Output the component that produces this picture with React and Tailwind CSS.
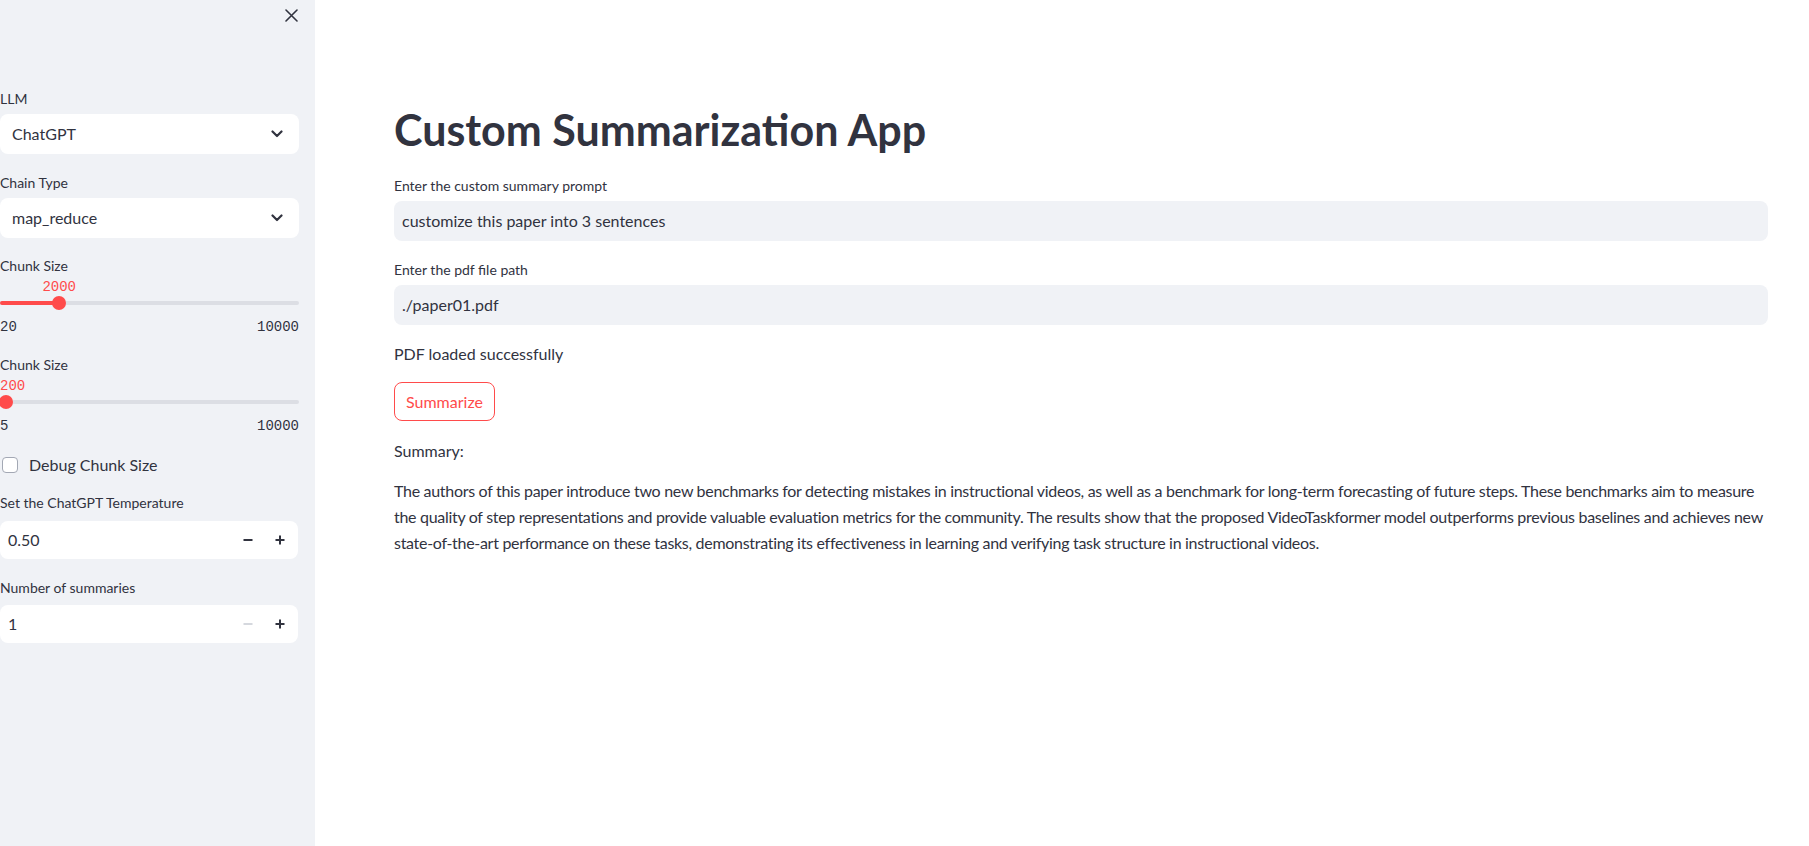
import React from 'react';

const font = { fontFamily: '"Source Sans Pro", Lato, "Noto Sans", sans-serif' };

const Chevron = () => (
  <svg width="12" height="8" viewBox="0 0 12 8" fill="none">
    <path d="M1.5 1.5 L6 6 L10.5 1.5" stroke="#31333f" strokeWidth="2.2" strokeLinecap="round" strokeLinejoin="round" />
  </svg>
);

const SelectBox = ({ value }) => (
  <div className="h-10 w-[299px] bg-white rounded-lg flex items-center justify-between pl-3 pr-4 text-base text-[#31333f]">
    <span>{value}</span>
    <Chevron />
  </div>
);

const Label = ({ children, className = '' }) => (
  <div className={`text-sm leading-5 text-[#31333f] ${className}`}>{children}</div>
);

// slider track is 299px wide in the sidebar
const Slider = ({ label, value, pct, min, max }) => (
  <div className="w-[299px]">
    <Label>{label}</Label>
    <div className="relative h-[19px] font-['Liberation_Mono',monospace] text-sm text-[#ff4b4b] leading-[19px]">
      {pct === 0 ? (
        <span className="absolute top-[2px] left-0">{value}</span>
      ) : (
        <span className="absolute top-[2px] -translate-x-1/2" style={{ left: `${pct * 299}px` }}>{value}</span>
      )}
    </div>
    <div className="relative h-4 flex items-center">
      <div className="h-1 w-full rounded bg-[#dcdee4]" />
      <div className="absolute left-0 h-1 rounded bg-[#ff4b4b]" style={{ width: `${pct * 299}px` }} />
      <div className="absolute h-3.5 w-3.5 rounded-full bg-[#ff4b4b]" style={{ left: `${Math.max(pct * 299 - 7, -1)}px` }} />
    </div>
    <div className="mt-[7px] flex justify-between h-[18px] leading-[18px] font-['Liberation_Mono',monospace] text-sm text-[#31333f]">
      <span>{min}</span>
      <span>{max}</span>
    </div>
  </div>
);

const Minus = ({ color }) => (
  <svg width="10" height="10" viewBox="0 0 10 10"><rect x="0.5" y="4" width="9" height="2" fill={color} /></svg>
);
const Plus = () => (
  <svg width="10" height="10" viewBox="0 0 10 10">
    <rect x="0.5" y="4" width="9" height="2" fill="#31333f" />
    <rect x="4" y="0.5" width="2" height="9" fill="#31333f" />
  </svg>
);

const NumberInput = ({ value, disabledMinus }) => (
  <div className="h-[38px] w-[298px] bg-white rounded-lg flex items-center pl-2 text-base text-[#31333f]">
    <span className="flex-1">{value}</span>
    <div className="w-8 flex justify-center"><Minus color={disabledMinus ? '#d5d8de' : '#31333f'} /></div>
    <div className="w-8 flex justify-center mr-0.5"><Plus /></div>
  </div>
);

const Sidebar = () => (
  <aside className="w-[315px] shrink-0 bg-[#f0f2f6] min-h-screen">
    <div className="flex justify-end pr-[17px] pt-[9px] h-[89px]">
      <svg width="13" height="13" viewBox="0 0 13 13">
        <path d="M1 1 L12 12 M12 1 L1 12" stroke="#31333f" strokeWidth="1.6" strokeLinecap="round" />
      </svg>
    </div>
    <Label>LLM</Label>
    <div className="mt-[5px]"><SelectBox value="ChatGPT" /></div>
    <Label className="mt-[19px]">Chain Type</Label>
    <div className="mt-[5px]"><SelectBox value="map_reduce" /></div>
    <div className="mt-[18px]">
      <Slider label="Chunk Size" value="2000" pct={0.198} min="20" max="10000" />
    </div>
    <div className="mt-[19px]">
      <Slider label="Chunk Size" value="200" pct={0} min="5" max="10000" />
    </div>
    <div className="mt-[18px] h-6 flex items-center">
      <div className="ml-[2px] h-4 w-4 rounded border border-[#a3a8b4] bg-white" />
      <span className="ml-[11px] text-base text-[#31333f]">Debug Chunk Size</span>
    </div>
    <Label className="mt-[16px]">Set the ChatGPT Temperature</Label>
    <div className="mt-2"><NumberInput value="0.50" /></div>
    <Label className="mt-[19px]">Number of summaries</Label>
    <div className="mt-[7px]"><NumberInput value="1" disabledMinus /></div>
  </aside>
);

const TextInput = ({ value }) => (
  <div className="h-10 w-full bg-[#f0f2f6] rounded-lg flex items-center pl-2 text-base text-[#31333f]">
    {value}
  </div>
);

const App = () => (
  <div className="flex min-h-screen bg-white text-[#31333f]" style={font}>
    <Sidebar />
    <main className="flex-1 min-w-0 pl-[79px] pr-[41px]">
      <h1 className="mt-[103px] text-[43px] leading-[53px] font-bold text-[#31333f]">Custom Summarization App</h1>
      <Label className="mt-[20px]">Enter the custom summary prompt</Label>
      <div className="mt-[5px]"><TextInput value="customize this paper into 3 sentences" /></div>
      <Label className="mt-[19px]">Enter the pdf file path</Label>
      <div className="mt-[5px]"><TextInput value="./paper01.pdf" /></div>
      <p className="mt-[17px] text-base leading-6">PDF loaded successfully</p>
      <button className="mt-4 h-[39px] px-[11px] rounded-lg border border-[#ff4b4b] bg-white text-base text-[#ff4b4b]">
        Summarize
      </button>
      <p className="mt-[18px] text-base leading-6">Summary:</p>
      <p className="mt-[15px] text-base tracking-[-0.3px] leading-[26px] whitespace-nowrap">
        The authors of this paper introduce two new benchmarks for detecting mistakes in instructional videos, as well as a benchmark for long-term forecasting of future steps. These benchmarks aim to measure
        <br />
        the quality of step representations and provide valuable evaluation metrics for the community. The results show that the proposed VideoTaskformer model outperforms previous baselines and achieves new
        <br />
        state-of-the-art performance on these tasks, demonstrating its effectiveness in learning and verifying task structure in instructional videos.
      </p>
    </main>
  </div>
);

export default App;
